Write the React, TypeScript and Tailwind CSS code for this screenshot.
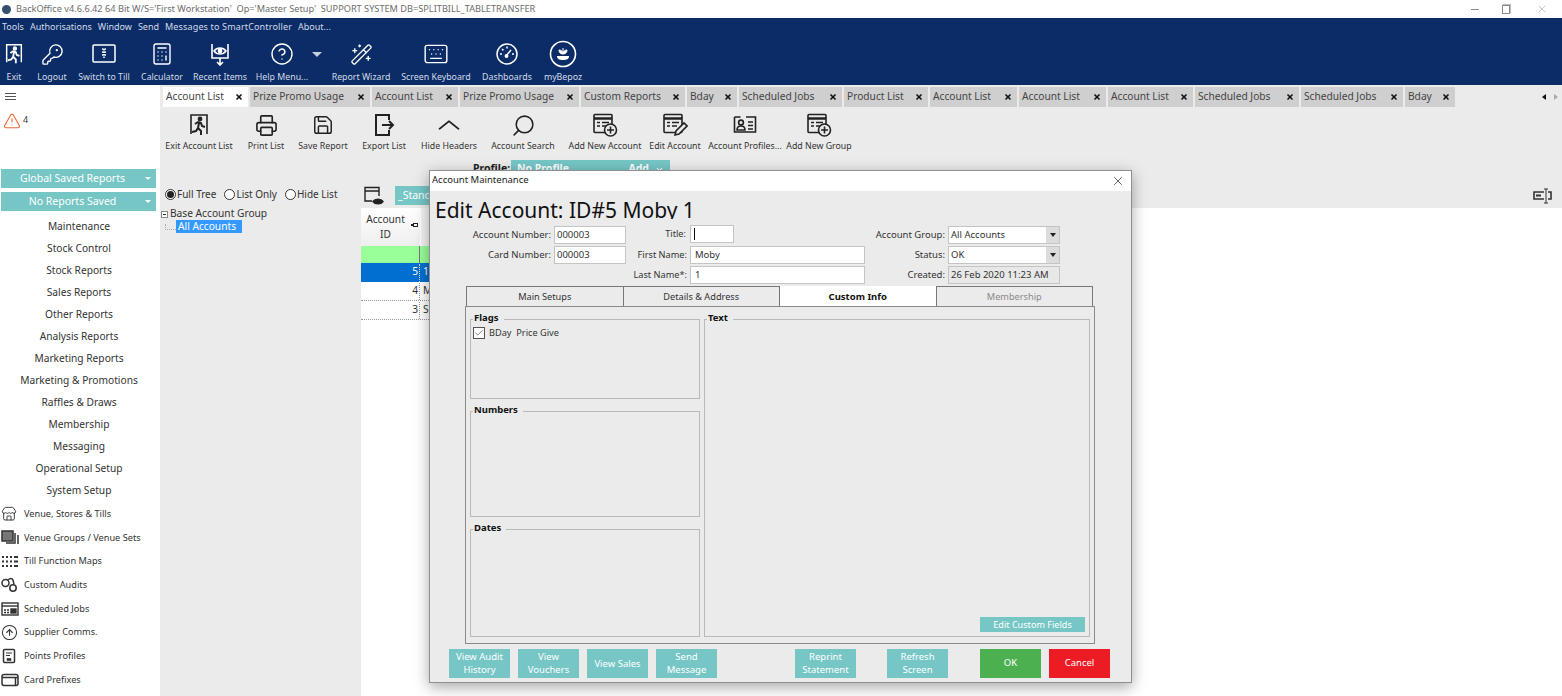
import {
  Calculator,
  Check,
  ChevronDown,
  ChevronUp,
  CircleArrowUp,
  CircleHelp,
  KeyRound,
  Keyboard,
  Printer,
  Save,
  Search,
  Store,
  TriangleAlert,
  WandSparkles,
  X,
} from 'lucide-react';
import type { ReactNode } from 'react';

const tabs = [
  { label: 'Account List', w: 'w-[85px]' },
  { label: 'Prize Promo Usage', w: 'w-[120px]' },
  { label: 'Account List', w: 'w-[86px]' },
  { label: 'Prize Promo Usage', w: 'w-[119px]' },
  { label: 'Custom Reports', w: 'w-[104px]' },
  { label: 'Bday', w: 'w-[50px]' },
  { label: 'Scheduled Jobs', w: 'w-[103px]' },
  { label: 'Product List', w: 'w-[84px]' },
  { label: 'Account List', w: 'w-[87px]' },
  { label: 'Account List', w: 'w-[87px]' },
  { label: 'Account List', w: 'w-[85px]' },
  { label: 'Scheduled Jobs', w: 'w-[104px]' },
  { label: 'Scheduled Jobs', w: 'w-[102px]' },
  { label: 'Bday', w: 'w-[50px]' },
];

const menuItems = [
  'Maintenance',
  'Stock Control',
  'Stock Reports',
  'Sales Reports',
  'Other Reports',
  'Analysis Reports',
  'Marketing Reports',
  'Marketing & Promotions',
  'Raffles & Draws',
  'Membership',
  'Messaging',
  'Operational Setup',
  'System Setup',
];

function RunnerIcon({ size = 22 }: { size?: number }) {
  return (
    <svg width={size} height={size} viewBox="0 0 24 24" fill="none" stroke="currentColor" strokeWidth="1.6">
      <path d="M4 21V2h16v19" />
      <circle cx="13" cy="6" r="1.6" fill="currentColor" />
      <path d="M8 11l3-2 3 1 1 3 3 1M12 10l-1 5 3 3v4M11 15l-2 3-4 1" strokeWidth="2" />
    </svg>
  );
}

function ScreenIcon() {
  return (
    <svg width="24" height="22" viewBox="0 0 24 22" fill="none" stroke="currentColor" strokeWidth="1.5">
      <rect x="1" y="2" width="22" height="17" rx="1" />
      <path d="M10 6h4M10 9h4M10 12h4M12 6v10" strokeDasharray="1.5 1" />
    </svg>
  );
}

function EyeDownIcon() {
  return (
    <svg width="22" height="24" viewBox="0 0 22 24" fill="none" stroke="currentColor" strokeWidth="1.6">
      <path d="M3 2v14h16V2M11 16v6M8 20l3 3 3-3" />
      <path d="M5 9c3-4 9-4 12 0-3 4-9 4-12 0z" />
      <circle cx="11" cy="9" r="1.6" fill="currentColor" />
    </svg>
  );
}

function DashIcon() {
  return (
    <svg width="24" height="24" viewBox="0 0 24 24" fill="none" stroke="currentColor" strokeWidth="1.5">
      <circle cx="12" cy="12" r="10" />
      <path d="M12 4.5v2M5 12h2M17 12h2M7 7l1.4 1.4M11 14l5-6" />
      <circle cx="11.5" cy="14" r="1.2" fill="currentColor" />
    </svg>
  );
}

function PlantIcon() {
  return (
    <svg width="28" height="28" viewBox="0 0 28 28" fill="none" stroke="currentColor" strokeWidth="1.6">
      <circle cx="14" cy="14" r="12.5" />
      <path d="M14 14c-3 0-4-2-4-4 2 0 4 1 4 4zM14 14c3 0 4-2 4-4-2 0-4 1-4 4zM14 14V8" fill="currentColor" strokeWidth="1" />
      <path d="M8 16h12c0 3-2 4-6 4s-6-1-6-4z" fill="currentColor" stroke="none" />
    </svg>
  );
}

function ExportIcon() {
  return (
    <svg width="22" height="24" viewBox="0 0 22 24" fill="none" stroke="currentColor" strokeWidth="2">
      <path d="M16 7V2H3v20h13v-5M9 12h11M16 8l4 4-4 4" />
    </svg>
  );
}

function DocIcon({ badge }: { badge?: 'plus' | 'pen' }) {
  return (
    <svg width="26" height="24" viewBox="0 0 26 24" fill="none" stroke="currentColor" strokeWidth="1.6">
      <rect x="2" y="1.5" width="18" height="18" rx="1" />
      <path d="M2 5.5h18" strokeWidth="2.5" />
      <path d="M5 9.5h3M10 9.5h7M5 13h3M10 13h5" />
      {badge === 'plus' && (
        <g>
          <circle cx="18.5" cy="17" r="6" fill="#ebebeb" />
          <path d="M18.5 13.5v7M15 17h7" />
        </g>
      )}
      {badge === 'pen' && <path d="M13 22l1-4 8-8 3 3-8 8z" fill="#ebebeb" />}
    </svg>
  );
}

function ProfileCardIcon() {
  return (
    <svg width="24" height="22" viewBox="0 0 24 22" fill="none" stroke="currentColor" strokeWidth="1.6">
      <path d="M1.5 3h6M13 3h9.5v15H1.5V3" />
      <circle cx="8" cy="8.5" r="2.4" />
      <path d="M4 16c0-3 2-4 4-4s4 1 4 4zM15 8h5M15 11.5h5M15 15h5" />
    </svg>
  );
}

function WindowEyeIcon() {
  return (
    <svg width="22" height="20" viewBox="0 0 22 20" fill="none" stroke="currentColor" strokeWidth="1.4">
      <path d="M9 15H2V1.5h14V10M2 5h14" />
      <path d="M10 15.5c2-3 8-3 10 0-2 3-8 3-10 0z" fill="currentColor" />
    </svg>
  );
}

function CuffsIcon() {
  return (
    <svg width="17" height="15" viewBox="0 0 17 15" fill="none" stroke="currentColor" strokeWidth="1.5">
      <circle cx="4.5" cy="6" r="3.5" />
      <circle cx="12" cy="11" r="3.2" />
      <path d="M7 3c2-2 4-2 5 0l1 4" />
    </svg>
  );
}

function CalendarIcon() {
  return (
    <svg width="18" height="15" viewBox="0 0 18 15" fill="none" stroke="currentColor" strokeWidth="1.4">
      <rect x="1" y="2" width="16" height="12" />
      <path d="M1 5h16" />
      <path d="M3 9h2M6 9h2M3 11.5h2M6 11.5h2" />
      <rect x="10" y="8" width="5" height="4" fill="currentColor" />
    </svg>
  );
}

function GroupsIcon() {
  return (
    <svg width="18" height="15" viewBox="0 0 18 15" fill="none" stroke="currentColor" strokeWidth="1.5">
      <rect x="1" y="1" width="11" height="10" fill="#777" />
      <path d="M14 3v10H5M17 5v9" />
    </svg>
  );
}

function TillMapIcon() {
  return (
    <svg width="18" height="13" viewBox="0 0 18 13" fill="currentColor">
      <path d="M1 1h2v2H1zM5 1h2v2H5zM9 1h2v2H9zM1 5.500h2v2H1zM5 5.500h2v2H5zM9 5.500h2v2H9zM1 10h2v2H1zM5 10h2v2H5zM9 10h2v2H9z" />
      <path d="M13 1h4v2h-4zM13 5.500h4v2h-4zM13 10h4v2h-4z" />
    </svg>
  );
}

function PointsIcon() {
  return (
    <svg width="16" height="16" viewBox="0 0 16 16" fill="none" stroke="currentColor" strokeWidth="1.5">
      <rect x="2.500" y="1.500" width="11" height="13" rx="1" />
      <path d="M5 5h6M5 7.500h4" strokeWidth="1.2" />
      <path d="M6 12.500h4v-2H6z" fill="currentColor" strokeWidth="0.6" />
    </svg>
  );
}

function CardIcon() {
  return (
    <svg width="18" height="14" viewBox="0 0 18 14" fill="none" stroke="currentColor" strokeWidth="1.5">
      <rect x="1" y="1.500" width="16" height="11" rx="2" />
      <path d="M1 4.500h16M14.500 4.500v8" />
    </svg>
  );
}

function TopTool({ label, icon, w }: { label: string; icon: ReactNode; w: string }) {
  return (
    <div className={`flex flex-col items-center ${w}`}>
      <div className="flex h-[30px] items-center text-white">{icon}</div>
      <span className="mt-[2px] whitespace-nowrap text-[8.800px] leading-[12px] text-[#d3dbe9]">{label}</span>
    </div>
  );
}

function PageTool({ label, icon, w }: { label: string; icon: ReactNode; w: string }) {
  return (
    <div className={`flex flex-col items-center ${w}`}>
      <div className="flex h-[26px] items-center text-[#222]">{icon}</div>
      <span className="mt-[2px] whitespace-nowrap text-[8.800px] leading-[12px] text-[#333]">{label}</span>
    </div>
  );
}

function TealButton({ children, w = 'w-[61px]' }: { children: ReactNode; w?: string }) {
  return (
    <button className={`flex h-[29px] items-center justify-center bg-[#76c6c6] pb-[1px] text-center text-[9.500px] leading-[13px] text-white ${w}`}>
      {children}
    </button>
  );
}

function GroupBox({ title, className, children }: { title: string; className: string; children?: ReactNode }) {
  return (
    <div className={`relative border border-[#b9b9b9] ${className}`}>
      <span className="absolute left-[2px] top-[-9px] bg-[#ebebeb] pl-[1px] pr-[5px] text-[9.500px] font-bold leading-[13px] text-[#111]">{title}</span>
      {children}
    </div>
  );
}

function SidebarLink({ icon, label }: { icon: ReactNode; label: string }) {
  return (
    <div className="flex h-[23.700px] items-center">
      <div className="flex w-[24px] shrink-0 items-center pl-[1px] text-[#333]">{icon}</div>
      <span className="whitespace-nowrap text-[9.200px] text-[#333]">{label}</span>
    </div>
  );
}

function Field({ label, value, w, labelSize = 'text-[9.500px]', pad = 'pl-[2px]' }: { label: string; value: string; w: string; labelSize?: string; pad?: string }) {
  return (
    <div className="flex items-center justify-end gap-[3px]">
      <span className={`whitespace-nowrap text-[#333] ${labelSize}`}>{label}</span>
      <div className={`flex h-[18px] items-center border border-[#c4c4c4] bg-white text-[9.500px] text-[#333] ${pad} ${w}`}>{value}</div>
    </div>
  );
}

function SelectField({ label, value }: { label: string; value: string }) {
  return (
    <div className="flex items-center justify-end gap-[3px]">
      <span className="text-[9.500px] text-[#333]">{label}</span>
      <div className="flex h-[18px] w-[112px] items-center justify-between border border-[#c4c4c4] bg-white pl-[2px] text-[9.500px] text-[#333]">
        {value}
        <span className="flex h-full w-[13px] items-center justify-center bg-[#dcdcdc]">
          <span className="border-x-[3px] border-t-[4px] border-x-transparent border-t-[#222]" />
        </span>
      </div>
    </div>
  );
}

function Radio({ label, checked }: { label: string; checked?: boolean }) {
  return (
    <div className="flex items-center gap-[1px] text-[10px] text-[#333]">
      <span className="flex h-[11px] w-[11px] items-center justify-center rounded-full border border-[#333] bg-white">
        {checked && <span className="h-[7px] w-[7px] rounded-full bg-[#222]" />}
      </span>
      {label}
    </div>
  );
}

export default function App() {
  return (
    <div className="relative flex h-[696px] w-[1562px] flex-col overflow-hidden bg-white font-['Noto_Sans',sans-serif]">
      {/* window title */}
      <div className="flex h-[18px] shrink-0 items-center bg-white pl-[2px] text-[9.200px] text-[#6d6d6d]">
        <span className="mr-[5px] h-[9px] w-[9px] rounded-full bg-[#35506f]" />
        <span className="whitespace-pre">BackOffice v4.6.6.42 64 Bit W/S='First Workstation'  Op='Master Setup'  SUPPORT SYSTEM DB=SPLITBILL_TABLETRANSFER</span>
        <div className="ml-auto flex items-center gap-[23px] pr-[14px] text-[#888]">
          <span className="h-px w-[8px] bg-[#888]" />
          <span className="mr-[3px] h-[9px] w-[8px] border border-[#888] shadow-[1px_-1px_0_#bbb]" />
          <X size={12} strokeWidth={1} />
        </div>
      </div>

      {/* menu and tools */}
      <div className="h-[67px] shrink-0 bg-[#0b2c66]">
        <div className="flex h-[18px] items-center gap-[6px] pl-[2px] text-[9px] text-[#d3dbe9]">
          <span>Tools</span>
          <span>Authorisations</span>
          <span>Window</span>
          <span>Send</span>
          <span className="tracking-[0.15px]">Messages to SmartController</span>
          <span>About...</span>
        </div>
        <div className="flex items-start pt-[3px]">
          <TopTool w="w-[28px]" label="Exit" icon={<RunnerIcon />} />
          <TopTool w="w-[48px]" label="Logout" icon={<KeyRound size={23} strokeWidth={1.4} />} />
          <TopTool w="w-[56px]" label="Switch to Till" icon={<ScreenIcon />} />
          <TopTool w="w-[60px]" label="Calculator" icon={<Calculator size={24} strokeWidth={1.4} />} />
          <TopTool w="w-[56px]" label="Recent Items" icon={<EyeDownIcon />} />
          <TopTool w="w-[68px]" label="Help Menu..." icon={<CircleHelp size={24} strokeWidth={1.4} />} />
          <div className="-ml-[5px] flex h-[30px] w-[12px] items-center justify-center">
            <span className="border-x-[5px] border-t-[5px] border-x-transparent border-t-[#c7cfdf]" />
          </div>
          <TopTool w="w-[76px]" label="Report Wizard" icon={<WandSparkles size={23} strokeWidth={1.4} />} />
          <TopTool w="w-[74px]" label="Screen Keyboard" icon={<Keyboard size={26} strokeWidth={1.3} />} />
          <TopTool w="w-[68px]" label="Dashboards" icon={<DashIcon />} />
          <TopTool w="w-[44px]" label="myBepoz" icon={<PlantIcon />} />
        </div>
      </div>

      <div className="flex min-h-0 flex-1">
        {/* left nav */}
        <aside className="flex w-[160px] shrink-0 flex-col bg-white">
          <div className="flex h-[22px] shrink-0 items-center pl-[5px] text-[#555]">
            <div className="flex w-[11px] flex-col gap-[2px]">
              <span className="h-px bg-[#555]" />
              <span className="h-px bg-[#555]" />
              <span className="h-px bg-[#555]" />
            </div>
          </div>
          <div className="flex h-[62px] shrink-0 items-start pl-[3px] pt-[5px] text-[9px] text-[#333]">
            <TriangleAlert size={18} strokeWidth={1.5} className="text-[#ee6a3a]" />
            <span className="ml-[2px] mt-[1px]">4</span>
          </div>
          <div className="flex flex-col gap-[4px] pl-[1px] pr-[4px]">
            <div className="relative flex h-[19px] items-center justify-center bg-[#76c6c6] pr-[12px] pt-[1px] text-[10.500px] text-white">
              Global Saved Reports
              <span className="absolute right-[5px] top-[8px] border-x-[3px] border-t-[3px] border-x-transparent border-t-white" />
            </div>
            <div className="relative flex h-[19px] items-center justify-center bg-[#76c6c6] pr-[12px] pt-[1px] text-[10.500px] text-white">
              No Reports Saved
              <span className="absolute right-[5px] top-[8px] border-x-[3px] border-t-[3px] border-x-transparent border-t-white" />
            </div>
          </div>
          <div className="mt-[5px] flex flex-col">
            {menuItems.map((item) => (
              <div key={item} className="flex h-[22px] items-center justify-center pr-[2px] text-[10.200px] text-[#333]">
                {item}
              </div>
            ))}
          </div>
          <div className="flex flex-col">
            <SidebarLink icon={<Store size={16} strokeWidth={1.4} />} label="Venue, Stores & Tills" />
            <SidebarLink icon={<GroupsIcon />} label="Venue Groups / Venue Sets" />
            <SidebarLink icon={<TillMapIcon />} label="Till Function Maps" />
            <SidebarLink icon={<CuffsIcon />} label="Custom Audits" />
            <SidebarLink icon={<CalendarIcon />} label="Scheduled Jobs" />
            <SidebarLink icon={<CircleArrowUp size={17} strokeWidth={1.5} />} label="Supplier Comms." />
            <SidebarLink icon={<PointsIcon />} label="Points Profiles" />
            <SidebarLink icon={<CardIcon />} label="Card Prefixes" />
          </div>
        </aside>

        <main className="flex min-w-0 flex-1 flex-col">
          {/* tab strip */}
          <div className="flex h-[22px] shrink-0 items-end gap-[2px] bg-[#ebebeb] pl-[3px]">
            {tabs.map((tab, i) => (
              <div
                key={i}
                className={`flex h-[20px] items-center justify-between pl-[3px] pr-[5px] text-[10.200px] text-[#444] ${tab.w} ${i === 0 ? 'bg-white' : 'bg-[#cfcfcf]'}`}
              >
                <span className="whitespace-nowrap">{tab.label}</span>
                <X size={8} strokeWidth={5} className="text-[#111]" />
              </div>
            ))}
            <div className="mb-[7px] ml-auto flex items-center gap-[8px] pr-[4px]">
              <span className="border-y-[3px] border-r-[4px] border-y-transparent border-r-[#111]" />
              <span className="border-y-[3px] border-l-[4px] border-y-transparent border-l-[#aaa]" />
            </div>
          </div>

          {/* page toolbar */}
          <div className="h-[101px] shrink-0 bg-[#ebebeb]">
            <div className="flex h-[53px] items-start pt-[5px]">
              <PageTool w="w-[78px]" label="Exit Account List" icon={<RunnerIcon size={24} />} />
              <PageTool w="w-[56px]" label="Print List" icon={<Printer size={23} strokeWidth={1.7} />} />
              <PageTool w="w-[58px]" label="Save Report" icon={<Save size={22} strokeWidth={1.6} />} />
              <PageTool w="w-[64px]" label="Export List" icon={<ExportIcon />} />
              <PageTool w="w-[66px]" label="Hide Headers" icon={<ChevronUp size={30} strokeWidth={1.4} className="scale-x-125" />} />
              <PageTool w="w-[82px]" label="Account Search" icon={<Search size={25} strokeWidth={1.5} className="-scale-x-100" />} />
              <PageTool w="w-[82px]" label="Add New Account" icon={<DocIcon badge="plus" />} />
              <PageTool w="w-[58px]" label="Edit Account" icon={<DocIcon badge="pen" />} />
              <PageTool w="w-[82px]" label="Account Profiles..." icon={<ProfileCardIcon />} />
              <PageTool w="w-[66px]" label="Add New Group" icon={<DocIcon badge="plus" />} />
            </div>
            <div className="flex h-[23px] items-start">
              <span className="ml-[313px] mt-[1px] text-[10.500px] font-bold text-[#222]">Profile:</span>
              <div className="ml-auto mr-[892px] flex h-[18px] w-[159px] items-center justify-between bg-[#76c6c6] px-[6px] text-[10.500px] font-bold text-white">
                <span>No Profile</span>
                <span className="flex items-center gap-[6px]">
                  Add
                  <ChevronDown size={9} strokeWidth={3} />
                </span>
              </div>
            </div>
            <div className="flex h-[25px] items-center">
              <div className="flex w-[201px] items-center gap-[8px] pb-[2px] pl-[5px]">
                <Radio label="Full Tree" checked />
                <Radio label="List Only" />
                <Radio label="Hide List" />
              </div>
              <div className="ml-[2px] text-[#222]">
                <WindowEyeIcon />
              </div>
              <div className="ml-[10px] flex h-[19px] w-[60px] items-center bg-[#76c6c6] pl-[3px] text-[10.500px] text-white">_Standard</div>
              <svg className="ml-auto mr-[9px] text-[#333]" width="20" height="16" viewBox="0 0 20 16" fill="none" stroke="currentColor">
                <path d="M11 4H1v7h10M15 4h3v7h-3" strokeWidth="1.6" />
                <path d="M3 7.500h5" strokeWidth="2" />
                <path d="M11 1h4M13 1v14M11 15h4" strokeWidth="1" />
              </svg>
            </div>
          </div>

          <div className="flex min-h-0 flex-1">
            {/* tree */}
            <div className="w-[201px] shrink-0 bg-[#ebebeb] text-[10.200px] text-[#333]">
              <div className="flex h-[12px] items-center pl-[1px]">
                <span className="mr-[2px] flex h-[7px] w-[7px] items-center justify-center border border-[#888] bg-white">
                  <span className="h-px w-[3px] bg-[#333]" />
                </span>
                Base Account Group
              </div>
              <div className="flex items-center">
                <span className="ml-[5px] h-[6px] w-[11px] border-b border-l border-dotted border-[#aaa]" />
                <div className="flex h-[13px] w-[66px] items-center bg-[#3399ff] pl-[2px] text-white">All Accounts</div>
              </div>
            </div>

            {/* list */}
            <div className="w-[72px] text-[10.200px] text-[#333]">
              <div className="flex h-[38px]">
                <div className="relative flex w-[59px] items-center justify-center bg-gradient-to-b from-white to-[#eeeeee] pr-[10px] text-center leading-[15px]">
                  Account
                  <br />
                  ID
                  <span className="absolute right-[2px] top-[15px] h-[4px] w-[5px] border border-[#222] shadow-[-3px_0_0_-1px_#222]" />
                </div>
                <div className="ml-px flex-1 bg-[#f4f4f4]" />
              </div>
              <div className="flex h-[17px] bg-[#99ff99]">
                <div className="w-[59px] border-r border-[#777]" />
              </div>
              <div className="flex h-[19px] bg-[#0070d0] pt-[1px] text-white">
                <div className="w-[59px] border-r border-dotted border-[#ddd] pr-[1px] text-right">5</div>
                <div className="pl-[3px]">1</div>
              </div>
              <div className="flex h-[19px] border-b border-dotted border-[#999] pt-[1px]">
                <div className="w-[59px] border-r border-dotted border-[#999] pr-[1px] text-right">4</div>
                <div className="pl-[3px]">M</div>
              </div>
              <div className="flex h-[19px] border-b border-dotted border-[#999] pt-[1px]">
                <div className="w-[59px] border-r border-dotted border-[#999] pr-[1px] text-right">3</div>
                <div className="pl-[3px]">S</div>
              </div>
            </div>
          </div>
        </main>
      </div>

      {/* account maintenance dialog */}
      <div className="absolute left-[429px] top-[170px] flex h-[513px] w-[703px] flex-col border border-[#8f8f8f] bg-[#ebebeb] shadow-[0_4px_14px_rgba(0,0,0,0.35)]">
        <div className="flex h-[20px] shrink-0 items-center justify-between bg-white pb-[1px] pl-[2px] pr-[6px] text-[9.500px] text-[#222]">
          Account Maintenance
          <X size={14} strokeWidth={1.2} />
        </div>
        <div className="h-[28px] shrink-0 overflow-hidden pl-[5px] pt-[5px] text-[21px] leading-[28px] text-[#111]">Edit Account: ID#5 Moby 1</div>

        <div className="flex h-[67px] shrink-0 pt-[7px]">
          <div className="flex w-[196px] flex-col gap-[2px]">
            <Field label="Account Number:" value="000003" w="w-[72px]" />
            <Field label="Card Number:" value="000003" w="w-[72px]" />
          </div>
          <div className="flex w-[239px] flex-col gap-[2px]">
            <div className="-mt-px mb-px flex items-center justify-end gap-[4px] pr-[131px]">
              <span className="text-[9.200px] text-[#333]">Title:</span>
              <div className="flex h-[18px] w-[44px] items-center border border-[#c4c4c4] bg-white pl-[3px]">
                <span className="h-[12px] w-px bg-[#111]" />
              </div>
            </div>
            <Field label="First Name:" value="Moby" w="w-[175px]" labelSize="text-[9.200px]" pad="pl-[4px]" />
            <Field label="Last Name*:" value="1" w="w-[175px]" labelSize="text-[9.200px]" pad="pl-[4px]" />
          </div>
          <div className="flex w-[195px] flex-col gap-[2px]">
            <SelectField label="Account Group:" value="All Accounts" />
            <SelectField label="Status:" value="OK" />
            <Field label="Created:" value="26 Feb 2020 11:23 AM" w="w-[112px] !bg-[#e8e8e8]" />
          </div>
        </div>

        <div className="ml-[36px] flex h-[20px] w-[627px] shrink-0 text-[9.200px] text-[#333]">
          <div className="flex flex-1 items-center justify-center border border-b-0 border-[#777] pt-[1px]">Main Setups</div>
          <div className="flex flex-1 items-center justify-center border-r border-t border-[#777] pt-[1px]">Details &amp; Address</div>
          <div className="z-10 flex flex-1 items-center justify-center bg-white pt-[2px] text-[9.500px] font-bold text-[#111]">Custom Info</div>
          <div className="flex flex-1 items-center justify-center border border-b-0 border-[#777] pt-[1px] text-[#8a8a8a]">Membership</div>
        </div>
        <div className="ml-[35px] flex h-[338px] w-[630px] shrink-0 gap-[4px] border border-[#8a8a8a] px-[4px] pb-[6px] pt-[12px]">
          <div className="flex w-[230px] flex-col gap-[12px]">
            <GroupBox title="Flags" className="h-[80px] pl-[2px] pt-[6px]">
              <div className="flex items-center gap-[4px] text-[9.200px] text-[#333]">
                <span className="flex h-[12px] w-[12px] items-center justify-center border border-[#555] bg-white">
                  <Check size={10} strokeWidth={1.5} />
                </span>
                <span className="whitespace-pre">BDay  Price Give</span>
              </div>
            </GroupBox>
            <GroupBox title="Numbers" className="h-[107px]" />
            <GroupBox title="Dates" className="h-[108px]" />
          </div>
          <GroupBox title="Text" className="flex flex-1 items-end justify-end p-[4px]">
            <div className="flex h-[15px] w-[105px] items-center justify-center bg-[#76c6c6] text-[9.100px] text-white">Edit Custom Fields</div>
          </GroupBox>
        </div>

        <div className="mt-[5px] flex pl-[19px]">
          <div className="flex gap-[8px]">
            <TealButton>View Audit<br />History</TealButton>
            <TealButton>View<br />Vouchers</TealButton>
            <TealButton>View Sales</TealButton>
            <TealButton>Send<br />Message</TealButton>
          </div>
          <div className="ml-[78px] flex gap-[31px]">
            <TealButton>Reprint<br />Statement</TealButton>
            <TealButton>Refresh<br />Screen</TealButton>
          </div>
          <div className="ml-[32px] flex gap-[8px]">
            <button className="h-[29px] w-[61px] bg-[#4caf50] text-[9.500px] text-white">OK</button>
            <button className="h-[29px] w-[61px] bg-[#ed1c24] text-[9.500px] text-white">Cancel</button>
          </div>
        </div>
      </div>
    </div>
  );
}
